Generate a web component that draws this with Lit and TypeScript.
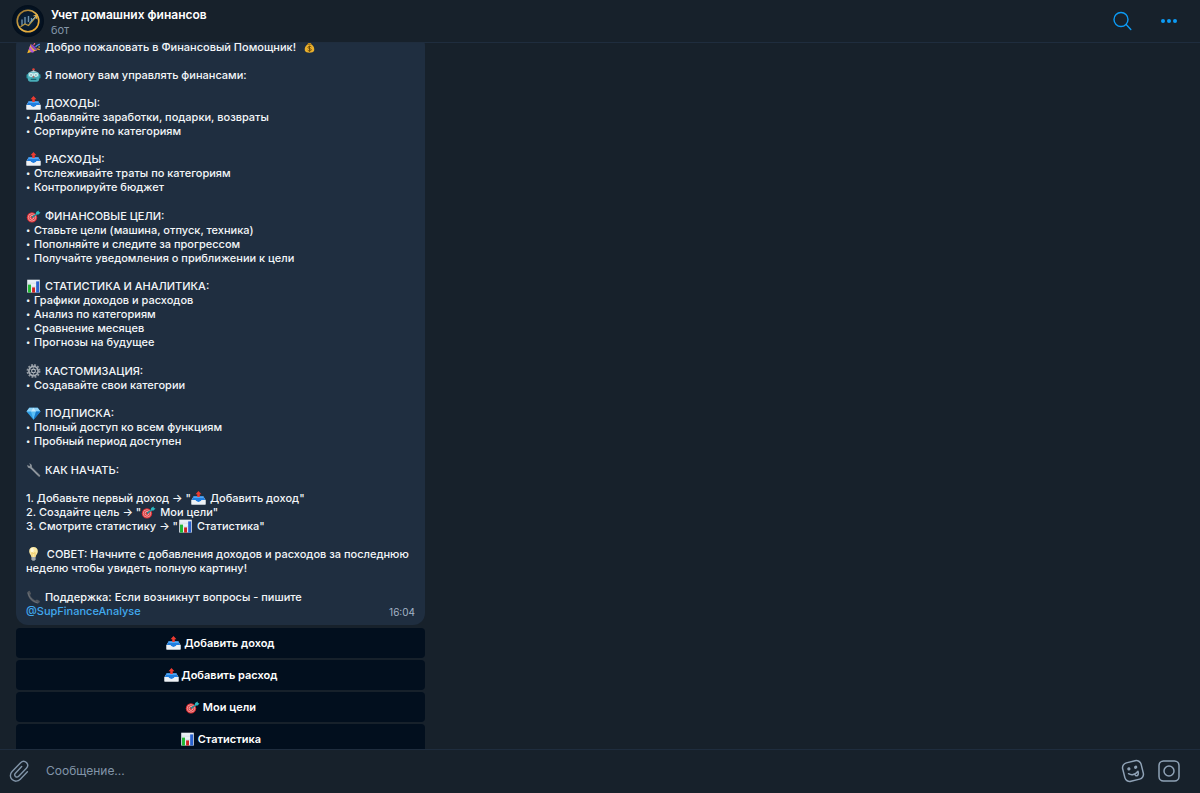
import { LitElement, html, svg, css, type TemplateResult, type SVGTemplateResult } from "lit";
import { customElement, property, query } from "lit/decorators.js";

const GLYPHS: Record<string, SVGTemplateResult> = {
  party: svg`
    <path d="M1 19 6 6l9 9z" fill="#f7b928"/>
    <path d="M3.2 13.4 4.8 9l6.4 8-3.6 1.2z" fill="#b45ad6"/>
    <path d="M6 6c3 0 8 5 9 9-3 1-10-6-9-9z" fill="#8b46b8"/>
    <path d="M10 7c2-1 2-3 1-5" stroke="#f4647d" stroke-width="1.6" fill="none"/>
    <path d="M13 10c1-3 3-3 6-4" stroke="#4d8df5" stroke-width="1.8" fill="none"/>
    <path d="M14 13c2-1 3 0 5 1" stroke="#f79a2e" stroke-width="1.5" fill="none"/>
    <circle cx="6" cy="3" r="1.2" fill="#f7c948"/><circle cx="15" cy="3" r="1.3" fill="#ef5a5a"/>
    <circle cx="18" cy="10" r="1" fill="#f7c948"/>`,
  bag: svg`
    <path d="M7 3h6l-1.5 3h-3z" fill="#d99b1e"/>
    <path d="M8 5.500h4c4 3 5.500 6.500 4.600 10-1 3.500-12.200 3.500-13.200 0-.9-3.500.6-7 4.600-10z" fill="#eab02c"/>
    <path d="M7 6h6" stroke="#8d6212" stroke-width="1.4"/>
    <path d="M12.600 10c-1-1.300-5-1.300-4.800.8.2 2 4.800 1 4.800 3.200 0 2-4 2-5.200.4M10 8.200v8.600" stroke="#6d4a08" stroke-width="1.400" fill="none"/>`,
  robot: svg`
    <circle cx="10" cy="2.2" r="1.8" fill="#e8443a"/><path d="M9 3h2v3H9z" fill="#9fb6bd"/>
    <path d="M3 8c1-5 13-5 14 0z" fill="#b5d7dc"/>
    <rect x="0" y="9" width="3" height="6" rx="1" fill="#2d98a5"/><rect x="17" y="9" width="3" height="6" rx="1" fill="#2d98a5"/>
    <rect x="2" y="6" width="16" height="13.500" rx="3" fill="#48adb8"/>
    <path d="M3 7h14v5H3z" fill="#a9dbe0"/>
    <circle cx="6.5" cy="10" r="2.4" fill="#f3ffff"/><circle cx="13.5" cy="10" r="2.4" fill="#f3ffff"/>
    <circle cx="6.5" cy="10" r="1" fill="#27717c"/><circle cx="13.5" cy="10" r="1" fill="#27717c"/>
    <path d="m10 11 1.6 2.600H8.400z" fill="#d9443a"/><path d="M6 16.200h8" stroke="#12646f" stroke-width="1.800"/>`,
  tray: svg`
    <path d="M3 8h14l3 5v6.4H0V13z" fill="#e4e9ef"/>
    <path d="M3 7.600h14l2.600 5.400h-5.200c-.6 3.400-8.200 3.400-8.800 0H.4z" fill="#1f7ee0"/>
    <path d="M3.400 8h13.200l1 2H2.400z" fill="#51a6f2"/>
    <path d="M0 13h5.400c.8 3.400 8.400 3.400 9.200 0H20v6.400H0z" fill="#eef1f5"/>
    <path d="M10 0 14.200 4.600H11.800V8.600H8.200V4.600H5.800z" fill="#ee3b30"/>`,
  target: svg`
    <circle cx="7.800" cy="12" r="7.400" fill="#dc2f34"/>
    <circle cx="7.800" cy="12" r="5.300" fill="none" stroke="#f3c6c5" stroke-width="1"/>
    <circle cx="7.800" cy="12" r="2.800" fill="none" stroke="#f3c6c5" stroke-width="1.200"/>
    <path d="M7.800 12 15.400 6.400" stroke="#158f9b" stroke-width="1.900"/>
    <path d="m13.200 8 .6-3.600L17.200 2l.5 2.400 2.300.5-2.800 3.100z" fill="#2cb6bf"/>`,
  chart: svg`
    <rect x="1" y="1" width="18" height="18.400" fill="#e9eff5"/>
    <path d="M1 6h18M1 11h18" stroke="#c4d2df" stroke-width=".7"/>
    <rect x="2.200" y="8" width="4.200" height="11.400" fill="#20b632"/>
    <rect x="8" y="12" width="4.200" height="7.400" fill="#cf2222"/>
    <rect x="13.800" y="3.400" width="4.200" height="16" fill="#2a62cf"/>`,
  gear: svg`
    <circle cx="10" cy="10" r="8.600" fill="none" stroke="#9299a1" stroke-width="2.600" stroke-dasharray="2.600 1.900"/>
    <circle cx="10" cy="10" r="6.600" fill="none" stroke="#a7aeb5" stroke-width="2.400"/>
    <circle cx="10" cy="10" r="2.700" fill="none" stroke="#b9bfc5" stroke-width="1.600"/>
    <path d="M10 4v3.400M10 12.600V16M4.800 7l3 1.700M12.300 11.300l3 1.700M15.200 7l-3 1.700M7.800 11.300l-3 1.700" stroke="#8b929a" stroke-width="1.200"/>`,
  gem: svg`
    <path d="M4 2.500h12l4 5.500-10 11.500L0 8z" fill="#2f9fe6"/>
    <path d="M4 2.500h12L20 8H0z" fill="#8fd3f8"/>
    <path d="m6.400 8 3.600 11.500L13.600 8z" fill="#5cc0f5"/>
    <path d="M10 2.500 6.400 8h7.200z" fill="#c4e9fc"/><path d="M13.600 8H20L10 19.500z" fill="#1878c8"/>`,
  wrench: svg`
    <path d="m6.600 6.600 11.600 11.600" stroke="#858c94" stroke-width="2.600" stroke-linecap="round"/>
    <path d="M5.200 6.400 16 17" stroke="#b4bac0" stroke-width=".8"/>
    <path d="M1.400 2.400c-1 3 1.600 6 5 5L7.600 6c1-3-1.400-5.400-4-5.200L5.400 3 4 4.600z" fill="#8d949b"/>`,
  bulb: svg`
    <path d="M10 0c4 0 6.200 2.800 6.200 6 0 3.600-2.700 4.800-3.200 8.200H7C6.500 10.800 3.800 9.600 3.800 6 3.800 2.800 6 0 10 0z" fill="#fbe9a4"/>
    <path d="M8 14 7.600 8l2.400 1.300L12.400 8 12 14" fill="none" stroke="#e9bd55" stroke-width="1"/>
    <ellipse cx="8" cy="4.500" rx="2.200" ry="3" fill="#fff8dc"/>
    <path d="M7 14.300h6v3.400L11.300 19.500H8.700L7 17.700z" fill="#a3a9ae"/>`,
  phone: svg`
    <path d="M1.300 4.200C.8 2.600 3 .8 4.600 1l2 4.200-1.500 2c1 3.400 4.300 6.700 7.700 7.700l2-1.500 4.200 2.200c.2 2-1.600 3.800-3.200 3.600C8.300 18.500 2 11.500 1.300 4.200z" fill="#51565d"/>
    <path d="M2 3.600C3.500 10.500 8.500 16.500 16 18.400" fill="none" stroke="#757b83" stroke-width="1"/>`,
};

const emoji = (name: string): TemplateResult =>
  html`<svg class="emoji" viewBox="0 0 20 20" aria-hidden="true">${GLYPHS[name]}</svg>`;

interface Topic {
  icon: string;
  title: string;
  items: string[];
}

const MONEY: Topic[] = [
  { icon: "tray", title: "ДОХОДЫ:", items: ["Добавляйте заработки, подарки, возвраты", "Сортируйте по категориям"] },
  { icon: "tray", title: "РАСХОДЫ:", items: ["Отслеживайте траты по категориям", "Контролируйте бюджет"] },
];

const PLANNING: Topic[] = [
  {
    icon: "target",
    title: "ФИНАНСОВЫЕ ЦЕЛИ:",
    items: [
      "Ставьте цели (машина, отпуск, техника)",
      "Пополняйте и следите за прогрессом",
      "Получайте уведомления о приближении к цели",
    ],
  },
  {
    icon: "chart",
    title: "СТАТИСТИКА И АНАЛИТИКА:",
    items: ["Графики доходов и расходов", "Анализ по категориям", "Сравнение месяцев", "Прогнозы на будущее"],
  },
];

const ACCOUNT: Topic[] = [
  { icon: "gear", title: "КАСТОМИЗАЦИЯ:", items: ["Создавайте свои категории"] },
  { icon: "gem", title: "ПОДПИСКА:", items: ["Полный доступ ко всем функциям", "Пробный период доступен"] },
];

const STEPS = [
  { text: "Добавьте первый доход", icon: "tray", action: "Добавить доход" },
  { text: "Создайте цель", icon: "target", action: "Мои цели" },
  { text: "Смотрите статистику", icon: "chart", action: "Статистика" },
];

const ACTIONS = [
  { icon: "tray", label: "Добавить доход" },
  { icon: "tray", label: "Добавить расход" },
  { icon: "target", label: "Мои цели" },
  { icon: "chart", label: "Статистика" },
];

const base = css`
  * { box-sizing: border-box; }
  button { font: inherit; color: inherit; background: none; border: 0; padding: 0; cursor: pointer; }
  p, ul, ol, h1, h2 { margin: 0; padding: 0; font: inherit; list-style: none; }
  svg { display: block; }
  .emoji { display: inline-block; width: 15px; height: 14px; vertical-align: -3px; }
`;

@customElement("chat-header")
export class ChatHeader extends LitElement {
  @property() name = "";
  @property() status = "";

  static styles = [base, css`
    :host { display: block; }
    header {
      display: flex; align-items: center; height: 43px; padding: 0 22px 0 12px;
      border-bottom: 1px solid #1f2d3e;
    }
    .avatar { width: 32px; height: 32px; margin-right: 7px; }
    .who { flex: 1; min-width: 0; padding-top: 1px; }
    .name { font-size: 12px; line-height: 16px; font-weight: 600; color: #fff; }
    .status { font-size: 11px; line-height: 14px; color: #8496a9; }
    .tools { display: flex; align-items: center; gap: 28px; color: #0c9bf5; }
  `];

  render() {
    return html`
      <header>
        <svg class="avatar" viewBox="0 0 32 32" aria-hidden="true">
          <defs>
            <radialGradient id="disc"><stop offset="0" stop-color="#0b2742"/><stop offset="1" stop-color="#030e1b"/></radialGradient>
            <linearGradient id="gold" x1="0" y1="0" x2="1" y2="1">
              <stop offset="0" stop-color="#8c6a2a"/><stop offset=".5" stop-color="#e0b04a"/><stop offset="1" stop-color="#f0a92a"/>
            </linearGradient>
          </defs>
          <circle cx="16" cy="16" r="16" fill="url(#disc)"/>
          <circle cx="16" cy="16" r="10.800" fill="none" stroke="url(#gold)" stroke-width="1.600"/>
          <path d="M10 14.500v6M13 12v7M16.500 11v6M19.500 13v4" stroke="#6a90ad" stroke-width="1.400"/>
          <path d="m8.500 21.800 4.500-2.800 3.500 1.500 8-9.500" fill="none" stroke="#b8963f" stroke-width="1.300"/>
          <path d="m17.500 18 6.500-7" stroke="#7fb8dd" stroke-width=".9"/>
          <path d="m21.500 11 3.500-1-.8 3.800" fill="none" stroke="#e0b04a" stroke-width="1.200"/>
        </svg>
        <div class="who">
          <h1 class="name">${this.name}</h1>
          <p class="status">${this.status}</p>
        </div>
        <div class="tools">
          <button aria-label="Поиск">
            <svg width="20" height="20" viewBox="0 0 20 20" fill="none" stroke="currentColor" stroke-width="1.400" stroke-linecap="round">
              <circle cx="9" cy="8.500" r="7"/><path d="m14.200 13.600 4.600 4.800"/>
            </svg>
          </button>
          <button aria-label="Меню">
            <svg width="18" height="20" viewBox="0 0 18 20" fill="currentColor">
              <circle cx="3" cy="10" r="2"/><circle cx="9" cy="10" r="2"/><circle cx="15" cy="10" r="2"/>
            </svg>
          </button>
        </div>
      </header>`;
  }
}

@customElement("bot-message")
export class BotMessage extends LitElement {
  static styles = [base, css`
    :host { display: block; }
    .bubble {
      padding: 6px 10px 7px; border-radius: 12px; background: #1f2e40; color: #f3f6f9;
      font-size: 11px; line-height: 14px; font-weight: 500;
    }
    .groups { display: grid; gap: 15px; }
    .group { display: grid; gap: 14px; }
    .head, .item { height: 14px; white-space: nowrap; }
    .head .emoji { margin-right: 1px; }
    .item { display: flex; }
    .dot { width: 8px; font-size: 8px; }
    .foot { display: flex; justify-content: space-between; align-items: flex-end; }
    .foot a { color: #41a9ee; text-decoration: none; }
    .foot time { font-size: 10px; line-height: 12px; font-weight: 400; color: #a3b4c6; }
  `];

  private topic(t: Topic) {
    return html`
      <section>
        <h2 class="head">${emoji(t.icon)} ${t.title}</h2>
        <ul>${t.items.map((i) => html`<li class="item"><span class="dot">•</span>${i}</li>`)}</ul>
      </section>`;
  }

  render() {
    return html`
      <article class="bubble">
        <div class="groups">
          <div class="group">
            <p class="head">${emoji("party")} Добро пожаловать в Финансовый Помощник! &nbsp;${emoji("bag")}</p>
            <p class="head">${emoji("robot")} Я помогу вам управлять финансами:</p>
            ${MONEY.map((t) => this.topic(t))}
          </div>
          <div class="group">${PLANNING.map((t) => this.topic(t))}</div>
          <div class="group">${ACCOUNT.map((t) => this.topic(t))}</div>
          <div class="group">
            <h2 class="head">${emoji("wrench")} КАК НАЧАТЬ:</h2>
            <ol>
              ${STEPS.map((s, n) => html`<li class="head">${n + 1}. ${s.text} → "${emoji(s.icon)} ${s.action}"</li>`)}
            </ol>
            <p>${emoji("bulb")}&nbsp; СОВЕТ: Начните с добавления доходов и расходов за последнюю неделю чтобы увидеть полную картину!</p>
          </div>
          <div>
            <p class="head">${emoji("phone")} Поддержка: Если возникнут вопросы - пишите</p>
            <div class="foot"><a href="#SupFinanceAnalyse">@SupFinanceAnalyse</a><time>16:04</time></div>
          </div>
        </div>
      </article>`;
  }
}

@customElement("chat-composer")
export class ChatComposer extends LitElement {
  static styles = [base, css`
    :host { display: block; }
    form {
      display: flex; align-items: center; height: 44px; padding: 0 19px 1px 9px;
      border-top: 1px solid #1f2d3e; color: #8295a9;
    }
    input {
      flex: 1; min-width: 0; margin: 0 16px; padding: 0; border: 0; outline: 0; background: none;
      font: inherit; font-size: 12px; line-height: 16px; color: #f3f6f9;
    }
    input::placeholder { color: #8295a9; opacity: 1; }
    .tools { display: flex; gap: 12px; color: #8fa2b6; }
  `];

  render() {
    return html`
      <form @submit=${(e: Event) => e.preventDefault()}>
        <button type="button" aria-label="Прикрепить файл">
          <svg width="21" height="24" viewBox="0 0 21 24" fill="none" stroke="currentColor" stroke-width="1.400" stroke-linecap="round" stroke-linejoin="round">
            <path d="M18.400 12.800 11.300 20.300c-2.400 2.500-6 2.400-8.200.3-2.300-2.200-2.300-5.600 0-8L11.600 3.700c1.700-1.700 4.200-1.700 5.800-.2 1.600 1.600 1.600 4 0 5.700l-7.700 8c-1 1-2.400 1-3.300.2-.9-.9-.9-2.200 0-3.200l6.300-6.600"/>
          </svg>
        </button>
        <input type="text" aria-label="Сообщение" placeholder="Сообщение..." />
        <div class="tools">
          <button type="button" aria-label="Стикеры">
            <svg width="24" height="24" viewBox="0 0 24 24" fill="none" stroke="currentColor" stroke-width="1.500" stroke-linecap="round" stroke-linejoin="round">
              <g transform="rotate(-14 12 12)">
                <rect x="2.500" y="2.500" width="19" height="19" rx="5"/>
                <circle cx="8.500" cy="9" r=".9" fill="currentColor"/><circle cx="15.500" cy="9" r=".9" fill="currentColor"/>
                <path d="M7 13.500c2.500 2.600 6.500 2.600 9.800 0M13 15.300c-.2 3.300 3.800 3.300 3.800-1.700"/>
              </g>
            </svg>
          </button>
          <button type="button" aria-label="Видеосообщение">
            <svg width="24" height="24" viewBox="0 0 24 24" fill="none" stroke="currentColor" stroke-width="1.500">
              <rect x="2" y="2" width="20" height="20" rx="4.500"/><circle cx="12" cy="12" r="5"/>
            </svg>
          </button>
        </div>
      </form>`;
  }
}

@customElement("app-root")
export class AppRoot extends LitElement {
  @query(".feed") private feed!: HTMLElement;

  static styles = [base, css`
    :host {
      display: flex; flex-direction: column; height: 100vh; background: #17212b;
      font-family: Inter, "Noto Sans", sans-serif;
    }
    .feed { flex: 1; min-height: 0; overflow-y: auto; scrollbar-width: none; padding: 8px 16px; }
    .thread { display: grid; gap: 3px; max-width: 409px; }
    .actions { display: grid; gap: 2px; }
    .action {
      height: 30px; border-radius: 4px; background: #020f1e; color: #fff;
      font-size: 11px; line-height: 14px; font-weight: 600;
    }
  `];

  firstUpdated() {
    requestAnimationFrame(() => { this.feed.scrollTop = 17; });
  }

  render() {
    return html`
      <chat-header name="Учет домашних финансов" status="бот"></chat-header>
      <main class="feed">
        <div class="thread">
          <bot-message></bot-message>
          <div class="actions">
            ${ACTIONS.map((a) => html`<button class="action">${emoji(a.icon)} ${a.label}</button>`)}
          </div>
        </div>
      </main>
      <chat-composer></chat-composer>`;
  }
}
